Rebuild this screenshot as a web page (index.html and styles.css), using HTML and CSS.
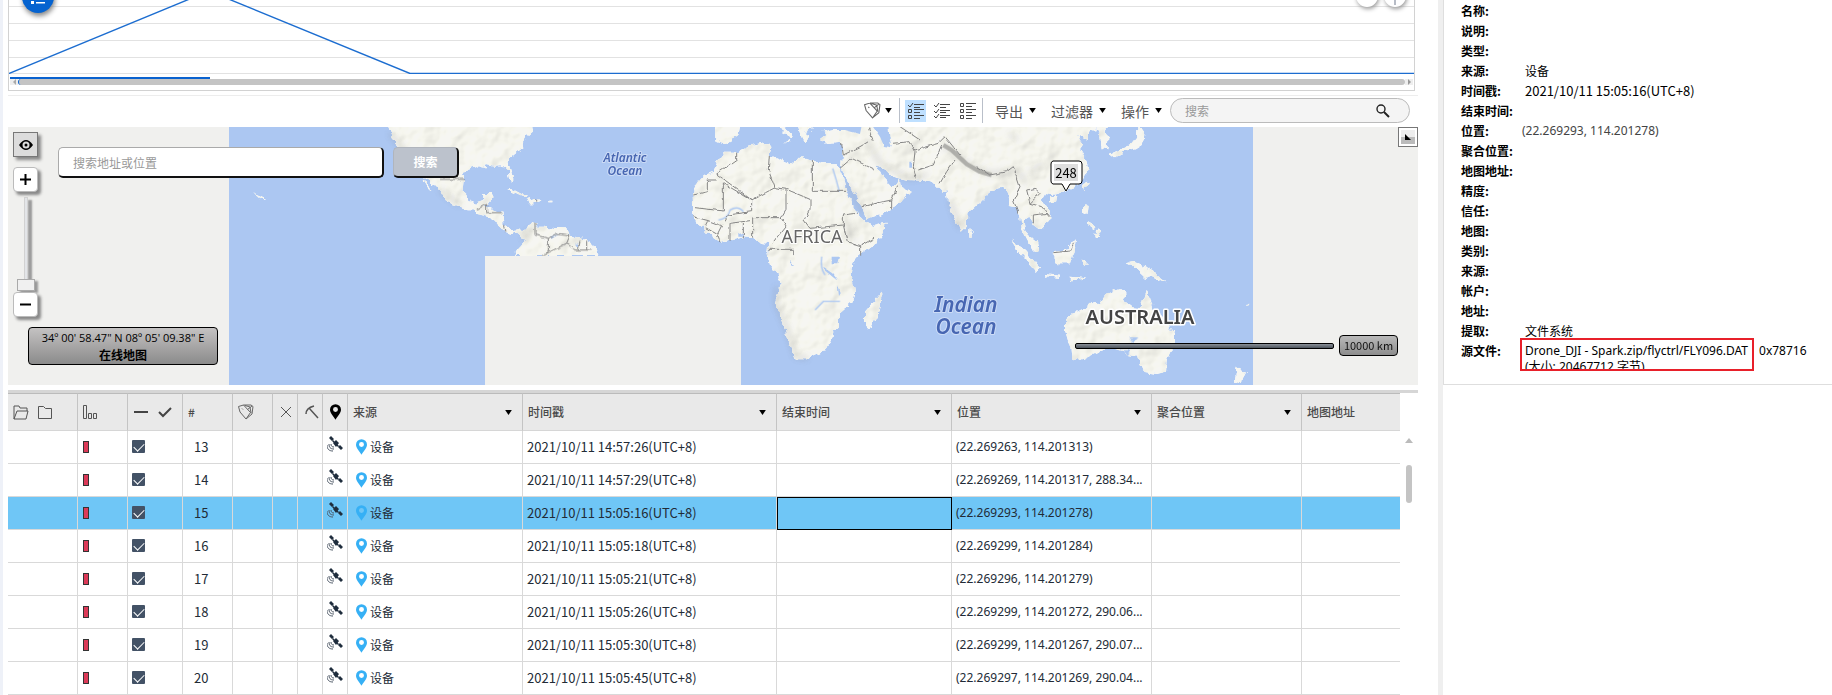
FILE: index.html
```html
<!DOCTYPE html>
<html lang="zh-CN">
<head>
<meta charset="utf-8">
<title>时间线与地图</title>
<link rel="stylesheet" href="styles.css">
</head>
<body>
<svg class="defs" aria-hidden="true">
  <symbol id="i-tag" viewBox="0 0 16 16"><path d="M.5 2.500l5-1.500 7 7.500-4.500 6.500L2 8zM5.500 1H13l2 1.500-1 7.500-6 5M7 1.500l5 1.500 1 6M9.500 5.500L14 2M4 4.500l1 1" fill="none" stroke="#666"/></symbol>
  <symbol id="i-sat" viewBox="0 0 16 16"><g fill="#1f2d3d"><path d="M4 0l3 3-2 2-3-3zM13 9l3 3-2 2-3-3zM9 4l3 3-3 4-3-4z"/><path d="M6 4l6 6-1 1-6-6z"/></g><path d="M2 8c0 3 1 5 5 5M0 9c0 4 2 6 6 6M4 8c0 2 1 3 3 3" fill="none" stroke="#4a5563"/></symbol>
  <symbol id="i-pin" viewBox="0 0 12 17"><path fill-rule="evenodd" d="M6 0a6 6 0 0 1 6 6c0 4-4 7-6 11C4 13 0 10 0 6a6 6 0 0 1 6-6zm0 3a2.700 2.700 0 1 0 0 5.400A2.700 2.700 0 0 0 6 3z"/></symbol>
  <symbol id="i-caret" viewBox="0 0 8 6"><path d="M0 0h8L4 6z" fill="#000"/></symbol>
</svg>

<div class="app">
<main class="main">
  <section class="chart" aria-label="时间线">
    <svg class="chart-plot" viewBox="0 0 1405 74" preserveAspectRatio="none">
      <path d="M0 6.500H1405M0 23.500H1405M0 40.500H1405M0 57.500H1405M0 73.500H1405" stroke="#e2e2e2" fill="none"/>
      <path d="M0 73.500L200 -9L401 73.500H1405" stroke="#1c6dd0" stroke-width="1.400" fill="none"/>
    </svg>
    <div class="range"></div>
    <div class="hscroll"><i class="arrow-l"></i><div class="hthumb"></div><i class="arrow-r"></i></div>
    <button class="fab" aria-label="图例"><svg width="32" height="32" viewBox="0 0 32 32"><g fill="#fff"><rect x="9" y="20" width="3" height="3"/><rect x="14" y="21" width="9" height="1.500"/></g></svg></button>
    <button class="round out" aria-label="缩小"></button>
    <button class="round in" aria-label="放大"><i></i></button>
  </section>

  <div class="toolbar">
    <button class="tb tagb" aria-label="标签"><svg width="17" height="17"><use href="#i-tag"/></svg><svg class="caret" width="7" height="5"><use href="#i-caret"/></svg></button>
    <div class="group">
      <button class="tb view on" aria-label="视图一"><svg width="16" height="16" viewBox="0 0 16 16" fill="none" stroke="#444"><path d="M0 2l2 2 3-4M6 1.500h10M6 4.500h6M6 6.500h10M6 9.500h6M6 12.500h10M6 15.500h6M.5 6.500h3v3h-3zM.5 12.500h3v3h-3z"/></svg></button>
      <button class="tb view" aria-label="视图二"><svg width="16" height="16" viewBox="0 0 16 16" fill="none" stroke="#444"><path d="M0 2l2 2 3-4M0 8l2 2 3-4M0 13l2 2 3-4M6 1.500h10M6 4.500h6M6 7.500h10M6 9.500h6M6 12.500h10M6 14.500h6"/></svg></button>
      <button class="tb view" aria-label="视图三"><svg width="16" height="16" viewBox="0 0 16 16" fill="none" stroke="#444"><path d="M.5 .5h3v3h-3zM.5 6.500h3v3h-3zM.5 12.500h3v3h-3zM6 .5h10M6 3.500h6M6 6.500h10M6 9.500h6M6 12.500h10M6 15.500h6"/></svg></button>
    </div>
    <div class="menus">
      <button class="tb menu">导出<svg width="7" height="5"><use href="#i-caret"/></svg></button>
      <button class="tb menu">过滤器<svg width="7" height="5"><use href="#i-caret"/></svg></button>
      <button class="tb menu">操作<svg width="7" height="5"><use href="#i-caret"/></svg></button>
    </div>
    <label class="search"><input type="text" placeholder="搜索" aria-label="搜索"><svg width="14" height="14" viewBox="0 0 14 14" fill="none" stroke="#222"><circle cx="5" cy="5" r="4" stroke-width="1.400"/><path d="M8 8l5 5" stroke-width="2"/></svg></label>
  </div>

  <section class="map" aria-label="地图">
    <svg class="map-art" viewBox="0 0 1410 258" preserveAspectRatio="xMidYMid slice">
      <defs>
        <filter id="relief" x="0" y="0" width="1410" height="258" filterUnits="userSpaceOnUse" color-interpolation-filters="sRGB">
          <feTurbulence type="fractalNoise" baseFrequency="0.15" numOctaves="2" seed="4" result="n"/>
          <feDisplacementMap in="SourceGraphic" in2="n" scale="7" xChannelSelector="R" yChannelSelector="G" result="d"/>
          <feTurbulence type="fractalNoise" baseFrequency="0.040" numOctaves="3" seed="9" result="t"/>
          <feDiffuseLighting in="t" surfaceScale="1" diffuseConstant="1.130" lighting-color="#fffffb" result="l"><feDistantLight azimuth="225" elevation="62"/></feDiffuseLighting>
          <feComposite in="l" in2="d" operator="in" result="ll"/>
          <feBlend in="d" in2="ll" mode="multiply"/>
        </filter>
        <filter id="rough" x="0" y="0" width="1410" height="258" filterUnits="userSpaceOnUse" color-interpolation-filters="sRGB">
          <feTurbulence type="fractalNoise" baseFrequency="0.150" numOctaves="2" seed="4" result="n"/>
          <feDisplacementMap in="SourceGraphic" in2="n" scale="4" xChannelSelector="R" yChannelSelector="G"/>
        </filter>
        <filter id="soft"><feGaussianBlur stdDeviation="3"/></filter>
        <clipPath id="world"><path d="M221 0H1245V258H221z"/></clipPath>
      </defs>
      <path fill="#f0f0ee" d="M0 0H1410V258H0z"/>
      <path fill="#acc7f2" d="M221 0H1245V258H221z"/>
      <g clip-path="url(#world)">
      <g filter="url(#relief)" fill="#f6f6f2">
        <g transform="translate(432 -7) scale(.33333)">
          <path d="M-160 15L-145 55-120 85-80 150-30 180 5 220 20 245 65 262 80 268 105 268 112 282 145 290 170 305 172 318 195 335 215 342 225 332 240 345 250 335 240 325 215 328 190 315 188 278 160 272 150 262 135 262 152 240 155 222 130 222 130 240 105 248 85 240 70 215 75 175 68 165 80 148 110 138 135 143 140 135 165 140 190 138 205 150 212 185 220 180 207 135 205 122 225 105 250 85 248 70 258 50 275 35 272 15z"/>
          <path d="M-52 178l12 6 14 26-8-4zM188 208l30 0 45 24-10 2-45-22zM262 240l20-6 28 10-20 6-24 0zM325 245h15v5h-15zM-565 215l30 12 12 16-8 0-12-16z"/>
          <path d="M240 345L262 320 290 308 285 320 310 320 350 325 375 322 378 335 405 352 440 360 462 375 478 408 222 408 232 390 255 365z"/>
        </g>
        <g transform="translate(672 -7) scale(.33333)">
          <path d="M38 222L45 200 60 180 75 165 100 155 112 125 135 95 170 95 200 82 255 70 268 68 274 85 268 105 300 118 340 132 365 112 395 122 430 130 470 130 485 165 500 215 515 250 530 280 555 305 580 318 617 308 612 335 580 375 535 408 520 425 515 465 525 520 520 545 480 580 480 620 460 635 455 660 430 695 380 718 345 718 330 680 315 620 285 550 300 500 295 465 270 435 262 400 265 372 240 368 225 355 190 352 150 362 120 368 95 350 75 330 50 305 40 290z"/>
          <path d="M105 10L106 60 135 70 150 62 175 45 182 10zM290 10l20 30 25 15-15 12-12-2 22 0 8-18-22-24zM350 10l10 30 15 28 8-10-5-20 20-10-10-20zM420 60l20-15-10-20 20 8 40-8 60-10H1250L1245 30 1230 40 1225 60 1190 45 1210 75 1200 90 1218 120 1225 150 1205 180 1180 205 1150 215 1115 225 1095 222 1085 240 1112 280 1110 305 1080 330 1060 315 1045 290 1030 300 1035 330 1050 350 1068 365 1072 392 1060 392 1040 355 1025 325 1020 280 1010 262 990 258 985 220 970 200 945 205 920 225 890 255 862 280 860 320 845 335 820 290 805 250 800 210 785 215 760 190 730 182 680 180 640 170 620 150 592 135 605 165 635 200 660 180 662 198 692 212 660 250 600 285 560 297 545 260 520 215 500 180 482 150 488 90 485 68 440 72z"/>
          <path d="M605 515l-50 60 0 45 15 10 20-40 18-60zM868 328l10 10 0 15-10 0zM995 360l40 30 45 55-10 10-50-55zM1090 462l50 5v6l-45-4zM1115 398l45-10 28-30-5 40-10 35-40 0zM420 62h30v4z"/>
        </g>
        <g transform="translate(992 -7) scale(.33333)">
          <path d="M285 15L300 40 305 85 322 88 325 55 310 35 330 15zM412 15L430 40 425 75 405 88 375 95 345 115 330 103 368 85 395 72 412 50zM150 232l20-5-5 18-15 2zM248 200l10-18 8 4-10 24zM250 250l16 5-4 30-14-8zM265 300l10 5 14 20-5 5-20-15zM280 345l15-14 5 20-18 0zM245 420l18 10-10 12zM205 470l60 5-50 6zM380 430l20-5 60 25 18 15 20 25-25-10-15-8-20 4-40-38z"/>
          <path d="M195 600L205 585 250 570 280 545 300 550 320 520 360 508 380 518 370 540 395 560 420 570 437 510 450 530 462 570 485 590 525 640 525 665 500 720 498 755 470 762 430 755 412 710 385 705 370 690 330 680 270 705 235 722 215 720 212 690 195 630zM710 740l10 5 20 12-20 35-15-10zM555 475l30 12zM748 548l5 6-12 4z"/>
        </g>
      </g>
      <g fill="none" filter="url(#soft)" opacity=".45" stroke="#777" stroke-width="6">
        <path transform="translate(672 -7) scale(.33333)" d="M560 60L600 130 690 175 740 165M790 75L860 130 930 162 1010 150 1040 190M290 500l-2 50 30 70 30 90 35 5M550 280L500 190M1090 130l-40 30M990 40l20 20M500 300l20 60M810 240l30 85"/>
        <path transform="translate(432 -7) scale(.33333)" d="M-150 40l90 110M0 210l60 45M250 360l20-30"/>
      </g>
      <path transform="translate(672 -7) scale(.33333)" fill="none" stroke="#a0a09c" stroke-width="13" stroke-linejoin="round" opacity=".8" d="M790 75L815 90 860 132 900 155 935 165"/>
      <g fill="#acc7f2" filter="url(#rough)">
        <path transform="translate(672 -7) scale(.33333)" d="M575 15L600 50 612 78 635 82 628 50 625 15zM430 18l15 12 50 0 45 12 5-25zM688 125h8v15h-8zM455 410l25 0-5 20-20 0zM430 440l30 20 15 20-12-5-30-25zM472 490l10 30-5 8zM330 422l12 15-8 0zM175 335l18 15-18 0z"/>
        <path transform="translate(992 -7) scale(.33333)" d="M385 652l30 0-15 18zM368 690l20 0-2 22z"/>
        <path transform="translate(432 -7) scale(.33333)" d="M330 350l30-12-25 15zM405 370l10 0 0 15z"/>
      </g>
      <path transform="translate(672 -7) scale(.33333)" fill="none" stroke="#acc7f2" stroke-width="4" d="M115 300q30-5 35-30 25-15 40 5M405 570l25-26 50 0M425 410q-5 35 10 55M478 215q-10-40-20-70"/>
      <g fill="none" stroke="#858585" stroke-width="3" filter="url(#rough)">
        <path transform="translate(672 -7) scale(.33333)" d="M170 95v25l-60 42L215 240 285 203 265 150 268 105M110 180h-28v35l-42 10M130 188l0 85-85-10M130 190L215 240v35L145 285 135 305M285 203l35 5 70 30v30L372 300 390 325 490 315 490 285 530 280M397 122V214H497M318 208v60l-15 25-85 0v60M303 293l15 25-40 50M210 302l-60 8v55M190 310v45M40 290l45 12-10 20 35 20 10 25M85 302l40 15-15 30M265 388l75 0v18M490 315l12 50 40 12 0 30M542 377l40-22M485 72L490 105 540 80 565 65M480 145l35-30 70 35M545 260l65-15 25-5 20-45M635 240v25M565 20l15 45M640 70l50-5 15 30-5 45 10 40M705 90l70-20 20-20 45 55M785 75l-25 60-45 15M780 190l20-35 25-35M660 20l60 40M890 140l40 25 50-10 20-15 20 60-20 40 15 40M1040 210l10 40 35 10 25 30M1050 250l30-30-15-15-25 5M1060 310v-25l40-5M1120 398l50-5 12-25"/>
        <path transform="translate(432 -7) scale(.33333)" d="M0 178h75M110 268l30-15v25l45 0M190 315l5 20M285 310v35l40 10v40l-20 13M325 355l25-15 40 5-10 25-60 30M380 370l25 20 50 0M420 362l-5 25M440 362v28M290 238v10"/>
      </g>
      </g>
      <path fill="#f0f0ee" d="M477 129H733V258H477z"/>
      <g class="map-text">
        <g class="ocean small"><text x="617" y="35">Atlantic</text><text x="617" y="48">Ocean</text></g>
        <g class="ocean big"><text x="958" y="185">Indian</text><text x="958" y="207">Ocean</text></g>
        <text class="africa" x="804" y="116">AFRICA</text>
        <text class="australia" x="1132" y="197">AUSTRALIA</text>
      </g>
      <g>
        <path d="M1045 34h26a3 3 0 0 1 3 3v17a3 3 0 0 1-3 3h-9l-4 7-4-7h-9a3 3 0 0 1-2-3V37a3 3 0 0 1 2-3z" fill="#fff" stroke="#000"/>
        <path d="M1046 37h24v17h-24z" fill="#dedede"/>
        <text class="count" x="1058" y="51">248</text>
      </g>
    </svg>
    <div class="zoomer">
      <button class="sq eye" aria-label="显示"><svg width="14" height="10" viewBox="0 0 14 10"><path fill-rule="evenodd" d="M0 5q7-10 14 0-7 10-14 0zM7 1.500a3.500 3.500 0 1 0 0 7 3.500 3.500 0 0 0 0-7zM7 3.500a1.500 1.500 0 1 1 0 3 1.500 1.500 0 0 1 0-3z"/></svg></button>
      <button class="sq" aria-label="放大"><svg width="11" height="11" viewBox="0 0 11 11"><path d="M0 5.500h11M5.500 0v11" stroke="#000" stroke-width="2"/></svg></button>
      <div class="track"><i></i></div>
      <button class="sq" aria-label="缩小"><svg width="11" height="11" viewBox="0 0 11 11"><path d="M0 5.500h11" stroke="#000" stroke-width="2"/></svg></button>
    </div>
    <form class="map-search"><input type="text" placeholder="搜索地址或位置" aria-label="搜索地址或位置"><button type="button">搜索</button></form>
    <div class="coords"><span>34º 00' 58.47" N 08º 05' 09.38" E</span><b>在线地图</b></div>
    <button class="corner" aria-label="展开"><svg width="14" height="14" viewBox="0 0 14 14"><path d="M4 4l6 6H4z"/></svg></button>
    <div class="scale"><i></i><span>10000 km</span></div>
  </section>

  <section class="grid">
    <table>
      <colgroup><col class="c70"><col class="c50"><col class="c55"><col class="c50"><col class="c40"><col class="c25"><col class="c25"><col class="c25"><col class="c175"><col class="c254"><col class="c175"><col class="c200"><col class="c150"><col></colgroup>
      <thead><tr>
        <th><div class="pair"><svg width="16" height="15" viewBox="0 0 16 15" fill="none" stroke="#555"><path d="M1 14V1h5l1 2h7v3M1 14L4 6h11l-2 8z"/></svg><svg width="15" height="15" viewBox="0 0 15 15" fill="none" stroke="#555"><path d="M.5 13.500V1.500h5l2 2h6v10z"/></svg></div></th>
        <th><svg width="15" height="15" viewBox="0 0 15 15" fill="none" stroke="#555"><path d="M.5 .5h3v13h-3zM5.500 8.500h3v5h-3zM10.500 8.500h3v5h-3z"/></svg></th>
        <th><div class="pair marks"><svg width="14" height="14" viewBox="0 0 14 14"><path d="M0 7h14" stroke="#444" stroke-width="2"/></svg><svg width="14" height="14" viewBox="0 0 14 14"><path d="M1 7l4 4 8-8" fill="none" stroke="#444" stroke-width="2"/></svg></div></th>
        <th>#</th>
        <th><svg width="16" height="16"><use href="#i-tag"/></svg></th>
        <th class="narrow"><svg width="12" height="12" viewBox="0 0 12 12"><path d="M1 1l10 10M11 1L1 11" stroke="#555" fill="none"/></svg></th>
        <th class="narrow"><svg width="14" height="14" viewBox="0 0 14 14" fill="none" stroke="#555"><path d="M1 9q0-6 8-8M4 3l9 10" stroke-width="1.500"/></svg></th>
        <th class="narrow"><svg width="11" height="16"><use href="#i-pin"/></svg></th>
        <th><div class="hd">来源<svg width="7" height="5"><use href="#i-caret"/></svg></div></th>
        <th><div class="hd">时间戳<svg width="7" height="5"><use href="#i-caret"/></svg></div></th>
        <th><div class="hd">结束时间<svg width="7" height="5"><use href="#i-caret"/></svg></div></th>
        <th><div class="hd">位置<svg width="7" height="5"><use href="#i-caret"/></svg></div></th>
        <th><div class="hd">聚合位置<svg width="7" height="5"><use href="#i-caret"/></svg></div></th>
        <th>地图地址</th>
      </tr></thead>
      <tbody>
      <tr><td></td><td><i class="red"></i></td><td><input type="checkbox" checked aria-label="选择 13"></td><td class="num">13</td><td></td><td></td><td></td><td><svg class="sat" width="16" height="16"><use href="#i-sat"/></svg></td><td><div class="src"><svg width="11" height="16"><use href="#i-pin"/></svg>设备</div></td><td class="lat">2021/10/11 14:57:26(UTC+8)</td><td></td><td class="pos">(22.269263, 114.201313)</td><td></td><td></td></tr>
      <tr><td></td><td><i class="red"></i></td><td><input type="checkbox" checked aria-label="选择 14"></td><td class="num">14</td><td></td><td></td><td></td><td><svg class="sat" width="16" height="16"><use href="#i-sat"/></svg></td><td><div class="src"><svg width="11" height="16"><use href="#i-pin"/></svg>设备</div></td><td class="lat">2021/10/11 14:57:29(UTC+8)</td><td></td><td class="pos">(22.269269, 114.201317, 288.34...</td><td></td><td></td></tr>
      <tr class="sel"><td></td><td><i class="red"></i></td><td><input type="checkbox" checked aria-label="选择 15"></td><td class="num">15</td><td></td><td></td><td></td><td><svg class="sat" width="16" height="16"><use href="#i-sat"/></svg></td><td><div class="src"><svg width="11" height="16"><use href="#i-pin"/></svg>设备</div></td><td class="lat">2021/10/11 15:05:16(UTC+8)</td><td class="focus"></td><td class="pos">(22.269293, 114.201278)</td><td></td><td></td></tr>
      <tr><td></td><td><i class="red"></i></td><td><input type="checkbox" checked aria-label="选择 16"></td><td class="num">16</td><td></td><td></td><td></td><td><svg class="sat" width="16" height="16"><use href="#i-sat"/></svg></td><td><div class="src"><svg width="11" height="16"><use href="#i-pin"/></svg>设备</div></td><td class="lat">2021/10/11 15:05:18(UTC+8)</td><td></td><td class="pos">(22.269299, 114.201284)</td><td></td><td></td></tr>
      <tr><td></td><td><i class="red"></i></td><td><input type="checkbox" checked aria-label="选择 17"></td><td class="num">17</td><td></td><td></td><td></td><td><svg class="sat" width="16" height="16"><use href="#i-sat"/></svg></td><td><div class="src"><svg width="11" height="16"><use href="#i-pin"/></svg>设备</div></td><td class="lat">2021/10/11 15:05:21(UTC+8)</td><td></td><td class="pos">(22.269296, 114.201279)</td><td></td><td></td></tr>
      <tr><td></td><td><i class="red"></i></td><td><input type="checkbox" checked aria-label="选择 18"></td><td class="num">18</td><td></td><td></td><td></td><td><svg class="sat" width="16" height="16"><use href="#i-sat"/></svg></td><td><div class="src"><svg width="11" height="16"><use href="#i-pin"/></svg>设备</div></td><td class="lat">2021/10/11 15:05:26(UTC+8)</td><td></td><td class="pos">(22.269299, 114.201272, 290.06...</td><td></td><td></td></tr>
      <tr><td></td><td><i class="red"></i></td><td><input type="checkbox" checked aria-label="选择 19"></td><td class="num">19</td><td></td><td></td><td></td><td><svg class="sat" width="16" height="16"><use href="#i-sat"/></svg></td><td><div class="src"><svg width="11" height="16"><use href="#i-pin"/></svg>设备</div></td><td class="lat">2021/10/11 15:05:30(UTC+8)</td><td></td><td class="pos">(22.269299, 114.201267, 290.07...</td><td></td><td></td></tr>
      <tr><td></td><td><i class="red"></i></td><td><input type="checkbox" checked aria-label="选择 20"></td><td class="num">20</td><td></td><td></td><td></td><td><svg class="sat" width="16" height="16"><use href="#i-sat"/></svg></td><td><div class="src"><svg width="11" height="16"><use href="#i-pin"/></svg>设备</div></td><td class="lat">2021/10/11 15:05:45(UTC+8)</td><td></td><td class="pos">(22.269297, 114.201269, 290.04...</td><td></td><td></td></tr>
      </tbody>
    </table>
    <div class="vscroll"><i class="up"></i><i class="vthumb"></i></div>
  </section>
</main>

<aside class="side">
  <dl>
    <div><dt>名称:</dt><dd></dd></div>
    <div><dt>说明:</dt><dd></dd></div>
    <div><dt>类型:</dt><dd></dd></div>
    <div><dt>来源:</dt><dd>设备</dd></div>
    <div><dt>时间戳:</dt><dd class="lat">2021/10/11 15:05:16(UTC+8)</dd></div>
    <div><dt>结束时间:</dt><dd></dd></div>
    <div><dt>位置:</dt><dd class="pos link">(22.269293, 114.201278)</dd></div>
    <div><dt>聚合位置:</dt><dd></dd></div>
    <div><dt>地图地址:</dt><dd></dd></div>
    <div><dt>精度:</dt><dd></dd></div>
    <div><dt>信任:</dt><dd></dd></div>
    <div><dt>地图:</dt><dd></dd></div>
    <div><dt>类别:</dt><dd></dd></div>
    <div><dt>来源:</dt><dd></dd></div>
    <div><dt>帐户:</dt><dd></dd></div>
    <div><dt>地址:</dt><dd></dd></div>
    <div><dt>提取:</dt><dd>文件系统</dd></div>
    <div class="file"><dt>源文件:</dt><dd><div class="mark"><span>Drone_DJI - Spark.zip/flyctrl/FLY096.DAT</span><span class="size">(大小: 20467712 字节)</span></div><span>0x78716</span></dd></div>
  </dl>
</aside>
</div>
</body>
</html>
```

FILE: styles.css
```css
* { box-sizing: border-box; }
body { margin: 0; background: #fff; color: #222b36; font: 12px/16px "Noto Sans CJK SC", sans-serif; }
button, input { font: inherit; margin: 0; padding: 0; border: 0; }
button { background: none; display: flex; align-items: center; justify-content: center; }
svg { display: block; }
.defs { position: absolute; width: 0; height: 0; }
.lat { font-size: 13px; }
.pos { font-family: "Noto Sans", sans-serif; }

.app { display: flex; min-height: 100vh; border-left: 3px solid #eef1f8; }
.main { flex: 1; min-width: 0; padding: 0 20px 0 5px; }

.chart { position: relative; margin-right: 3px; height: 91px; overflow: hidden; border: 1px solid #d2d2d2; border-top: 0; }
.chart-plot { width: 100%; height: 74px; }
.range { width: 200px; height: 2px; margin: 3px 0 0 1px; background: #0a62cf; }
.hscroll { display: flex; align-items: center; height: 6px; margin: 0 1px; }
.hthumb { flex: 1; height: 6px; border-radius: 3px; background: #c4c4c4; border-left: 1px solid #0a62cf; }
.arrow-l, .arrow-r { width: 8px; height: 6px; background: #eee; }
.arrow-l::before, .arrow-r::before { content: ""; display: block; width: 0; margin-left: 3px; border: 3px solid transparent; border-left-width: 0; border-right: 3px solid #aaa; }
.arrow-r::before { border-right-width: 0; border-left: 3px solid #999; }
.fab { position: absolute; left: 13px; top: -19px; width: 32px; height: 32px; border-radius: 50%; background: #0563d0; box-shadow: 1px 3px 5px #888; }
.round { position: absolute; top: -15px; width: 22px; height: 22px; border-radius: 50%; background: #fff; box-shadow: 1px 2px 4px #999; }
.round.out { right: 36px; }
.round.in { right: 8px; }
.round i { width: 2px; height: 12px; margin-top: 6px; background: #b7bcc6; }

.toolbar { display: flex; align-items: center; justify-content: flex-end; height: 32px; margin-top: 4px; border-top: 1px solid #ededed; padding: 0 8px 2px 0; }
.tb { color: #555; }
.tagb { gap: 4px; margin-right: 7px; }
.group { display: flex; gap: 5px; height: 25px; align-items: center; padding: 0 4px 0 5px; border: solid #b9bfc9; border-width: 0 1px; }
.view { width: 21px; height: 22px; }
.view.on { background: #bfe0ff; }
.menus { display: flex; gap: 15px; padding: 0 8px 0 12px; }
.menu { gap: 6px; font-size: 14px; }
.search { display: flex; align-items: center; width: 240px; height: 25px; padding: 0 19px 0 14px; border: 1px solid #bbb; border-radius: 13px; background: #f4f4f4; }
.search input { flex: 1; min-width: 0; background: none; outline: 0; }
input::placeholder { color: #999; opacity: 1; }

.map { position: relative; height: 258px; overflow: hidden; background: #f0f0ee; }
.map-art { width: 100%; height: 100%; }
.map-text text { text-anchor: middle; paint-order: stroke; stroke-linejoin: round; font-family: "Noto Sans", sans-serif; }
.ocean text { fill: #4766b2; stroke: #cddcf6; stroke-width: 2px; font-style: italic; font-weight: 600; }
.ocean.small text { font-size: 12px; }
.ocean.big text { font-size: 21px; }
.map-text .africa { font-size: 18px; fill: #666; stroke: #fff; stroke-width: 2px; }
.map-text .australia { font-size: 20px; font-weight: 600; fill: #444; stroke: #fff; stroke-width: 3px; }
.count { font-size: 13px; text-anchor: middle; fill: #000; }
.zoomer { position: absolute; left: 5px; top: 5px; display: flex; flex-direction: column; align-items: center; }
.sq { width: 25px; height: 25px; background: #fff; border: 1px solid #bbb; border-radius: 4px; box-shadow: 3px 3px 3px #888; }
.eye { margin-bottom: 10px; background: #dcdcdc; border-color: #777; border-radius: 0; }
.track { display: flex; align-items: flex-end; justify-content: center; width: 4px; height: 95px; margin-top: 5px; background: #e3e5e8; border: 1px solid #d2d2d2; box-shadow: 4px 3px 2px #999; }
.track i { flex: none; width: 18px; height: 12px; background: #f0f0f0; border: 1px solid #aaa; box-shadow: 3px 2px 2px #999; }
.map-search { position: absolute; left: 50px; top: 20px; display: flex; gap: 9px; }
.map-search input { width: 326px; height: 31px; padding-left: 14px; background: #fff; border: 1px solid #aaa; border-right: 2px solid #111; border-bottom: 2px solid #111; border-radius: 5px; }
.map-search button { width: 66px; height: 31px; color: #fff; font-weight: 700; background: #bcc2cc; border: 1px solid #b0b5bd; border-right: 2px solid #111; border-bottom: 2px solid #111; border-radius: 5px; }
.coords { position: absolute; left: 20px; bottom: 20px; display: flex; flex-direction: column; align-items: center; width: 190px; padding: 2px 0 1px; color: #000; font-size: 11px; border: 1px solid #000; border-radius: 4px; background: linear-gradient(#c4c2c2, #8b8b8b); }
.coords span { font-family: "Open Sans", sans-serif; }
.coords b { font-size: 12px; line-height: 17px; }
.corner { position: absolute; right: 0; top: 0; width: 20px; height: 20px; border: 1px solid #777; background: #fff; }
.corner svg { background: linear-gradient(#eee 50%, #bbb 50%); }
.scale { position: absolute; right: 20px; bottom: 29px; display: flex; align-items: center; gap: 5px; color: #111; font-size: 11px; }
.scale i { width: 259px; height: 6px; border: 1px solid #000; border-radius: 2px; background: linear-gradient(#8a9098, #4c535c); }
.scale span { width: 59px; height: 21px; line-height: 18px; text-align: center; border: 1px solid #000; border-radius: 4px; background: linear-gradient(#b9b9b9, #8d8d8d); }

.grid { display: flex; margin-top: 5px; border-top: 3px solid #d6d6d6; }
table { flex: 1; width: 0; table-layout: fixed; border-collapse: separate; border-spacing: 0; }
.c25 { width: 25px; } .c40 { width: 40px; } .c50 { width: 50px; } .c55 { width: 55px; } .c70 { width: 70px; }
.c150 { width: 150px; } .c175 { width: 175px; } .c200 { width: 200px; } .c254 { width: 254px; }
th { height: 38px; padding: 0 5px; text-align: left; font-weight: 500; color: #4a4a4a; background: #e9e9e9; border: 1px solid #d6d6d6; border-width: 1px 1px 1px 0; border-top-color: #bbb; border-right-color: #c4c4c4; }
th.narrow { padding: 0 3px 0 7px; }
td { height: 33px; padding: 0 4px 1px; white-space: nowrap; overflow: hidden; border: 1px solid #d9d9d9; border-width: 0 1px 1px 0; }
th:last-child, td:last-child { border-right: 0; }
.pair { display: flex; gap: 9px; }
.marks { gap: 10px; padding-left: 1px; }
.hd { display: flex; align-items: center; justify-content: space-between; padding-right: 5px; }
.sel td { background: #6fc6f6; }
td.focus { border: 1px solid #000; }
.red { display: block; width: 6px; height: 12px; margin-left: 1px; background: #dc3a58; border: 1px solid #333; }
input[type=checkbox] { appearance: none; display: block; width: 13px; height: 13px; border-radius: 1px; background: #435266; }
input[type=checkbox]::before { content: ""; display: block; width: 9px; height: 5px; margin: 3px 0 0 2px; border: solid #fff; border-width: 0 0 1px 1px; transform: rotate(-45deg); }
.num { padding-left: 11px; font-size: 13px; }
td > .sat { margin: -6px 0 0 0; }
.src { display: flex; align-items: center; gap: 3px; padding-left: 4px; fill: #36b0f5; }
.vscroll { width: 18px; display: flex; flex-direction: column; align-items: center; padding-top: 45px; }
.up { border: 4px solid transparent; border-top: 0; border-bottom: 5px solid #bbb; }
.vthumb { width: 6px; height: 38px; margin-top: 22px; border-radius: 3px; background: #c4c4c4; }

.side { width: 394px; border-left: 5px solid #efefef; }
dl { margin: 0; padding: 1px 0 12px 17px; border: solid #dedede; border-width: 0 0 1px 1px; color: #000; }
dl > div { display: flex; height: 20px; line-height: 20px; }
dt { width: 64px; font-weight: 700; white-space: nowrap; }
dd { margin: 0; white-space: nowrap; }
.link { margin-left: -3px; color: #444; }
dl > .file { height: 31px; }
.file dt { width: 59px; }
.file dd { display: flex; gap: 5px; font-family: "Noto Sans", "Noto Sans CJK SC", sans-serif; }
.mark { height: 33px; margin-top: -3px; padding: 1px 4px 0 3px; overflow: hidden; border: 2px solid #e8202a; }
.mark span { display: block; }
.mark .size { line-height: 11px; }
```
